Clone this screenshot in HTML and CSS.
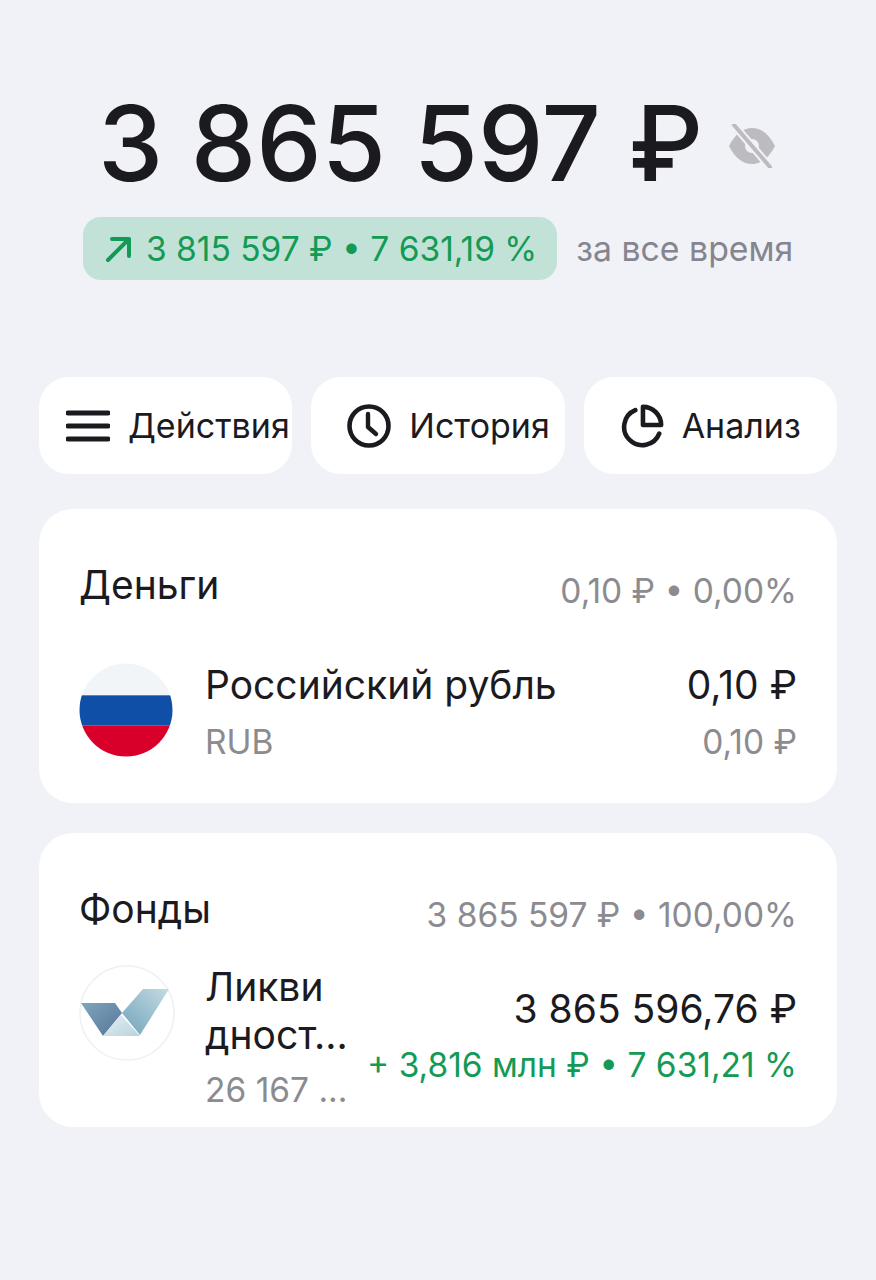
FILE: index.html
```html
<!DOCTYPE html>
<html lang="ru">

<head>
    <title>Портфель</title>
    <meta charset="UTF-8">
    <meta name="viewport" content="width=device-width, initial-scale=1">
    <link rel="stylesheet" href="styles.css">
</head>

<body>
    <header class="summary">
        <div class="total">
            <span class="total-value">3 865 597 ₽</span>
            <svg class="eye" viewBox="0 0 50 44" width="52" height="44">
                <path d="M2 22C8 10 16 4 25 4s17 6 23 18c-6 12-14 18-23 18S8 34 2 22z" fill="#bcbcc0" />
                <circle cx="25" cy="22" r="7" fill="#f0f2f7" />
                <path d="M7 1l36 42" stroke="#f0f2f7" stroke-width="8" />
                <path d="M7 1l36 42" stroke="#bcbcc0" stroke-width="4" stroke-linecap="round" />
            </svg>
        </div>
        <div class="change">
            <div class="change-badge">
                <svg viewBox="0 0 28 28" width="28" height="28">
                    <path d="M3 25L24 4M7 4h17v17" fill="none" stroke="#139a55" stroke-width="4" stroke-linecap="round" stroke-linejoin="round" />
                </svg>
                <span>3 815 597 ₽ • 7 631,19 %</span>
            </div>
            <span class="change-label">за все время</span>
        </div>
    </header>

    <nav class="actions">
        <button type="button" class="action action-wide">
            <svg viewBox="0 0 44 32" width="44" height="32">
                <path d="M2 3h40M2 16h40M2 29h40" stroke="#1b1b1f" stroke-width="5" stroke-linecap="round" />
            </svg>
            Действия
        </button>
        <button type="button" class="action">
            <svg viewBox="0 0 44 44" width="44" height="44">
                <circle cx="22" cy="22" r="19.500" fill="none" stroke="#1b1b1f" stroke-width="4.600" />
                <path d="M21 10v13l8 7" fill="none" stroke="#1b1b1f" stroke-width="4.400" stroke-linecap="round" stroke-linejoin="round" />
            </svg>
            История
        </button>
        <button type="button" class="action">
            <svg viewBox="0 0 46 46" width="44" height="44">
                <path d="M16 6.500A19 19 0 1 0 41 31" fill="none" stroke="#1b1b1f" stroke-width="4.800" stroke-linecap="round" />
                <path d="M24 3c10 0 19 8 19 19H24z" fill="none" stroke="#1b1b1f" stroke-width="4.800" stroke-linejoin="round" />
            </svg>
            Анализ
        </button>
    </nav>

    <section class="card">
        <div class="card-head">
            <h2>Деньги</h2>
            <span class="card-share">0,10 ₽ • 0,00%</span>
        </div>
        <div class="row row-money">
            <svg class="logo logo-flag" viewBox="0 0 96 96" width="94" height="96">
                <defs>
                    <clipPath id="flag-clip">
                        <circle cx="48" cy="48" r="47.500" />
                    </clipPath>
                </defs>
                <g clip-path="url(#flag-clip)">
                    <rect width="96" height="33" fill="#f1f5f7" />
                    <rect y="33" width="96" height="31" fill="#0f4fa8" />
                    <rect y="64" width="96" height="32" fill="#d8002b" />
                </g>
            </svg>
            <div class="row-name">
                <div class="name">Российский рубль</div>
                <div class="sub">RUB</div>
            </div>
            <div class="row-values">
                <div class="name">0,10 ₽</div>
                <div class="sub">0,10 ₽</div>
            </div>
        </div>
    </section>

    <section class="card card-funds">
        <div class="card-head">
            <h2>Фонды</h2>
            <span class="card-share">3 865 597 ₽ • 100,00%</span>
        </div>
        <div class="row row-fund">
            <svg class="logo logo-fund" viewBox="0 0 96 96" width="96" height="96">
                <defs>
                    <linearGradient id="fund-a" x1="0" y1="0" x2="1" y2="1">
                        <stop offset="0" stop-color="#7fa6bb" />
                        <stop offset="1" stop-color="#56749a" />
                    </linearGradient>
                    <linearGradient id="fund-b" x1="1" y1="0" x2="0" y2="1">
                        <stop offset="0" stop-color="#c5dbe2" />
                        <stop offset="1" stop-color="#6fa3ba" />
                    </linearGradient>
                    <linearGradient id="fund-c" x1="0" y1="0" x2="1" y2="1">
                        <stop offset="0" stop-color="#e4eff3" />
                        <stop offset="1" stop-color="#b9d2de" />
                    </linearGradient>
                </defs>
                <circle cx="48" cy="48" r="47" fill="#fff" stroke="#eef0f2" stroke-width="1.500" />
                <path d="M2 38h34l7 10-19 23z" fill="url(#fund-a)" />
                <path d="M24 71l18-21 19 21z" fill="url(#fund-c)" />
                <path d="M43 48l21-24h26L61 70z" fill="url(#fund-b)" />
            </svg>
            <div class="row-name row-name-fund">
                <div class="name">Ликви<br>дност...</div>
                <div class="sub">26 167 ...</div>
            </div>
            <div class="row-values row-values-fund">
                <div class="name">3 865 596,76 ₽</div>
                <div class="gain">+ 3,816 млн ₽ • 7 631,21 %</div>
            </div>
        </div>
    </section>
</body>

</html>
```

FILE: styles.css
```css
html {
    height: 100%;
}

body {
    margin: 0;
    padding: 0 39px;
    min-height: 100%;
    box-sizing: border-box;
    overflow: hidden;
    background-color: #f0f2f7;
    color: #1b1b1f;
    font-family: Inter, "Liberation Sans", sans-serif;
}

.summary {
    padding-top: 84px;
}

.total {
    display: flex;
    align-items: center;
    justify-content: center;
    gap: 23px;
}

.total-value {
    font-size: 104px;
    font-weight: 500;
    line-height: 118px;
    white-space: nowrap;
}

.eye {
    margin-top: 6px;
}

.change {
    display: flex;
    align-items: center;
    gap: 19px;
    margin: 15px 0 0 44px;
}

.change-badge {
    display: flex;
    align-items: center;
    gap: 13px;
    height: 63px;
    padding: 0 20px 0 22px;
    box-sizing: border-box;
    border-radius: 18px;
    background-color: #c3e2d7;
    color: #139a55;
    font-size: 33.500px;
    white-space: nowrap;
}

.change-label {
    color: #85858f;
    font-size: 33.800px;
    white-space: nowrap;
}

.actions {
    display: grid;
    grid-template-columns: repeat(3, 1fr);
    gap: 19px;
    margin-top: 97px;
}

.action {
    display: flex;
    align-items: center;
    gap: 18px;
    height: 97px;
    padding: 0 0 0 36px;
    border: none;
    border-radius: 30px;
    background-color: #fff;
    color: #1b1b1f;
    font-family: inherit;
    font-size: 34px;
    white-space: nowrap;
}

.action-wide {
    padding-left: 27px;
}

.card {
    height: 294px;
    margin-top: 35px;
    padding: 0 40px;
    box-sizing: border-box;
    border-radius: 34px;
    background-color: #fff;
}

.card-funds {
    margin-top: 30px;
}

.card-head {
    display: flex;
    justify-content: space-between;
    align-items: baseline;
    padding-top: 53px;
}

h2 {
    margin: 0;
    font-size: 39px;
    line-height: 46px;
    font-weight: 400;
}

.card-share {
    color: #8b8b90;
    font-size: 33.500px;
    position: relative;
    top: 4px;
}

.row {
    display: flex;
    align-items: flex-start;
    margin-top: 52px;
}

.row-fund {
    margin-top: 31px;
}

.logo {
    flex: none;
}

.logo-flag {
    margin: 2px 32px 0 0;
}

.logo-fund {
    margin: 2px 30px 0 0;
}

.row-name {
    flex: 1;
}

.row-name-fund {
    white-space: nowrap;
}

.name {
    font-size: 39px;
    line-height: 49px;
}

.row-name-fund .name {
    line-height: 48px;
}

.sub {
    margin-top: 8px;
    color: #8b8b90;
    font-size: 33.500px;
    line-height: 50px;
}

.row-name-fund .sub {
    margin-top: 6px;
}

.row-values {
    text-align: right;
}

.row-values-fund {
    padding-top: 21px;
}

.gain {
    margin-top: 7px;
    color: #139a55;
    font-size: 33.500px;
    line-height: 50px;
    white-space: nowrap;
}
```
